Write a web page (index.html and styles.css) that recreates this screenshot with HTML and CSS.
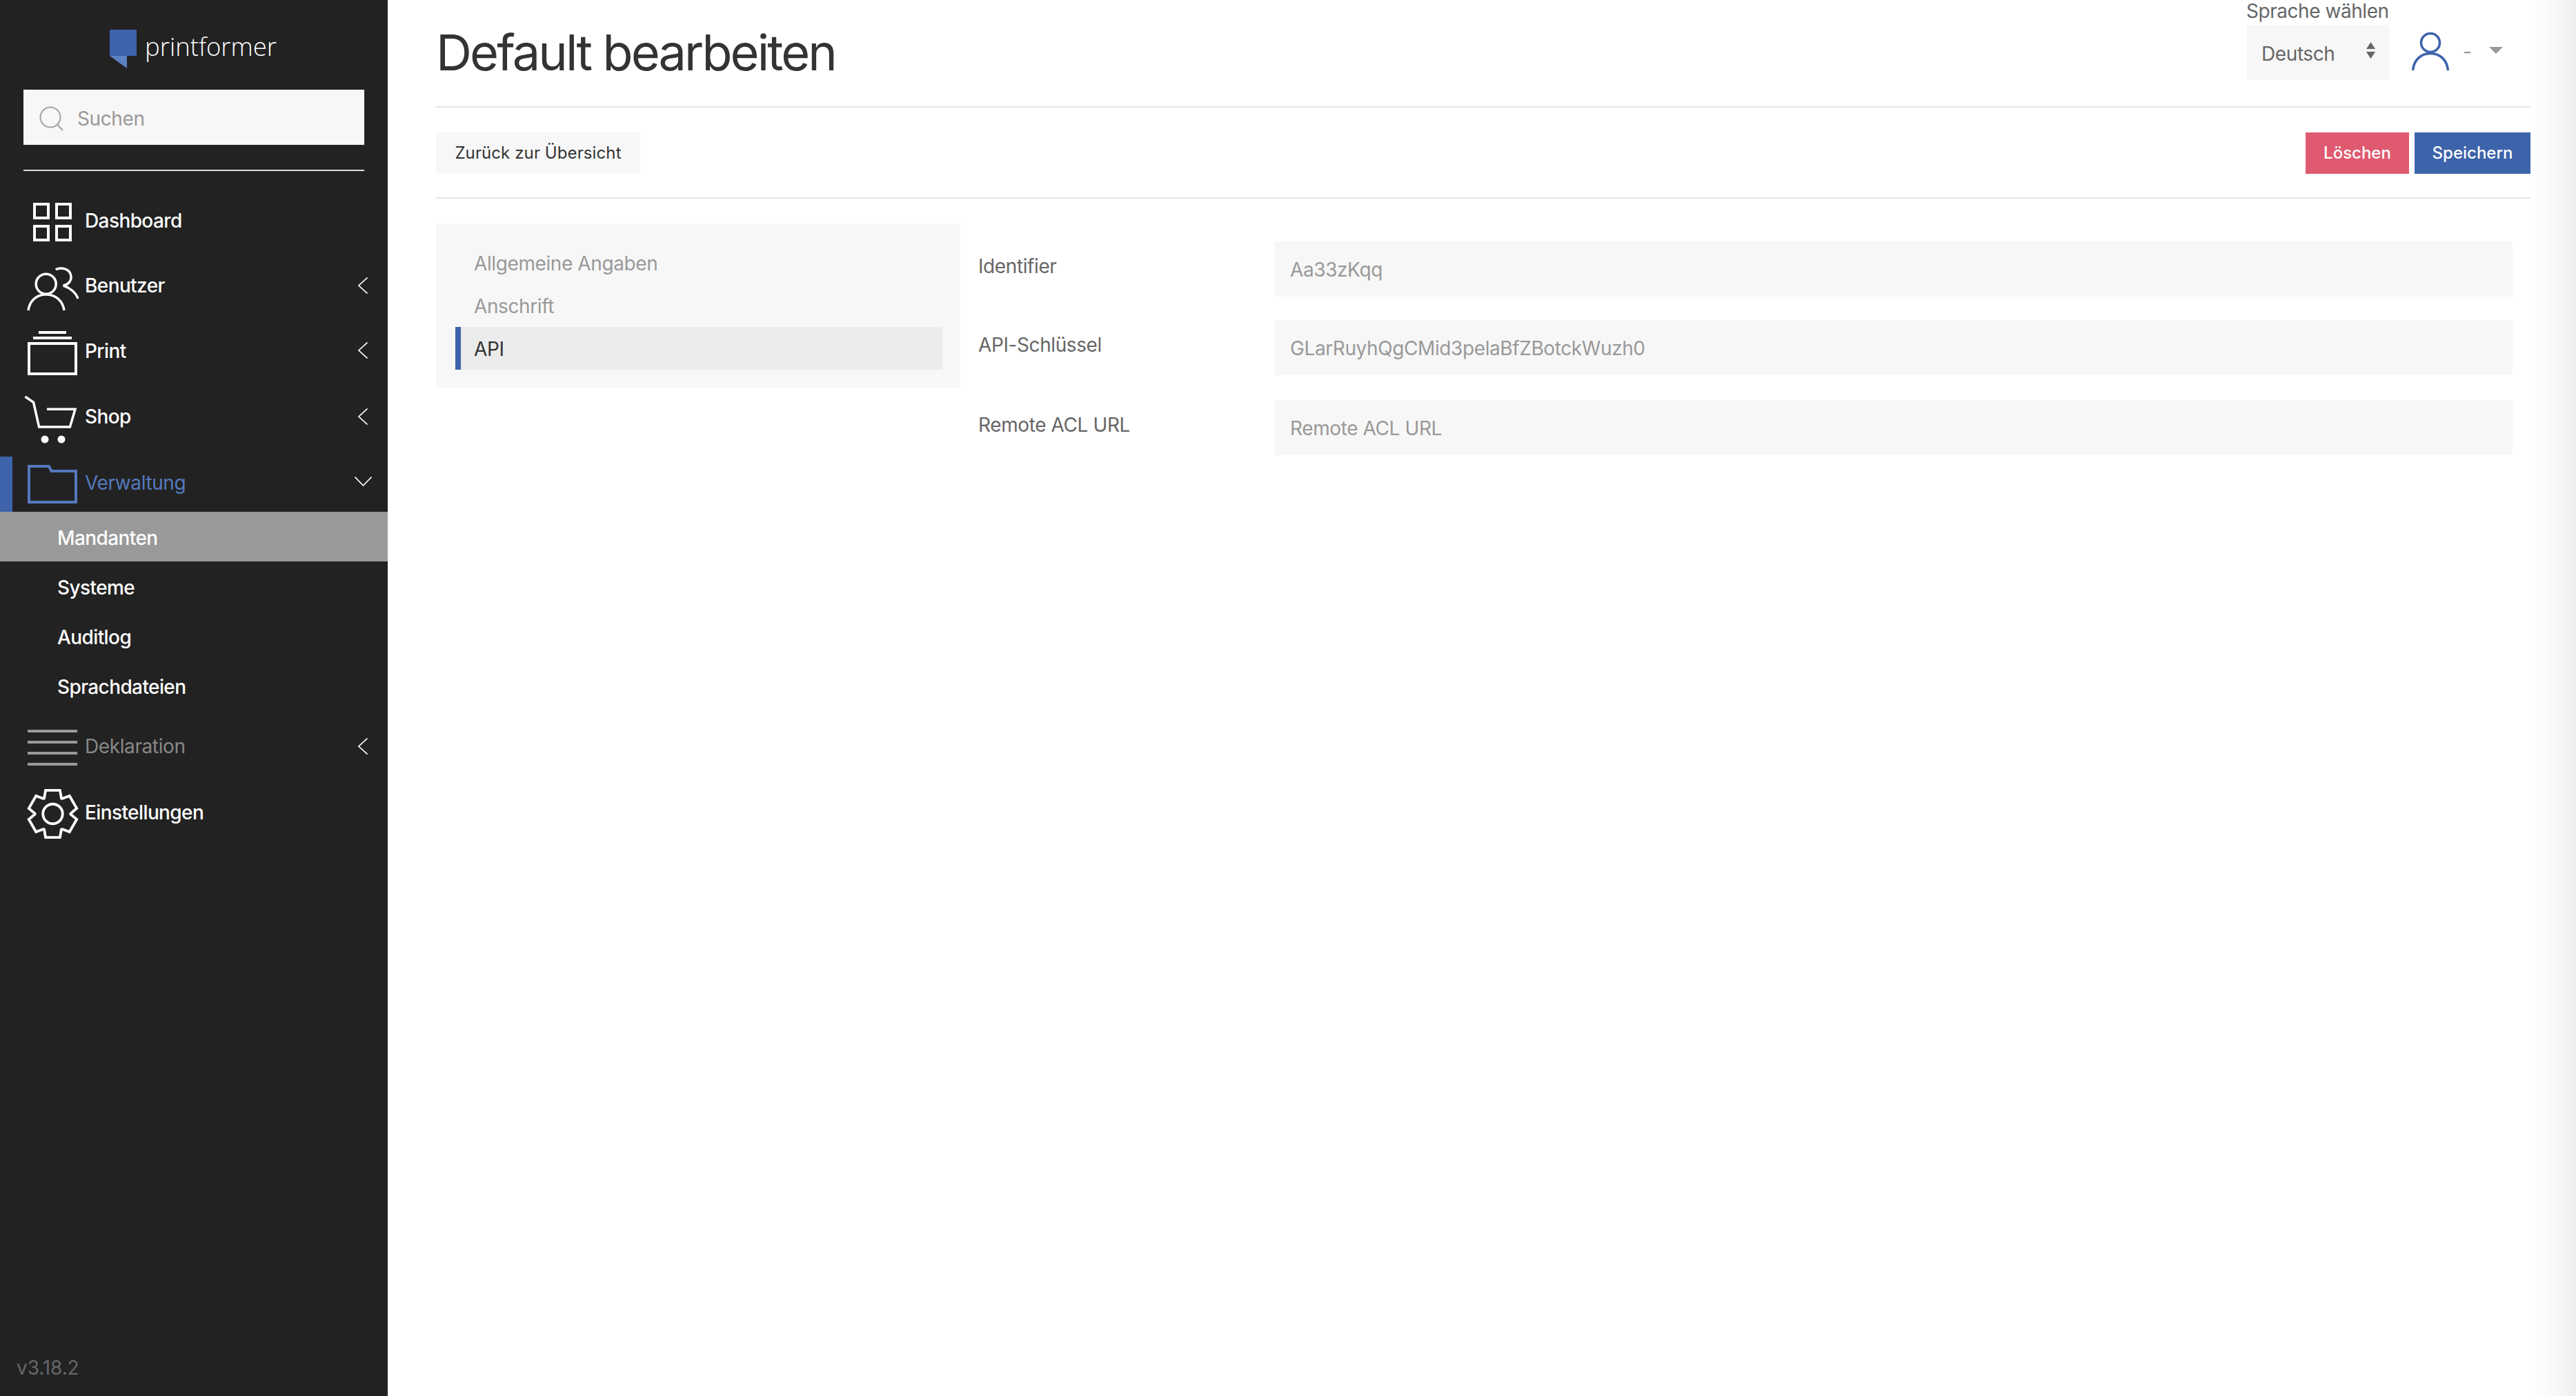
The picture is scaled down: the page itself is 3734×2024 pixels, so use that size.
FILE: index.html
```html
<!DOCTYPE html>
<html lang="de">
<head>
<meta charset="utf-8">
<title>Default bearbeiten</title>
<link rel="stylesheet" href="styles.css">
</head>
<body>
<div class="app">
  <aside class="sidebar">
    <div class="logo">
      <svg class="logo-mark" width="39" height="56" viewBox="0 0 39 56"><rect width="39" height="38" fill="#3d63aa"/><path d="M0 38H25V56Z" fill="#5c82c4"/></svg>
      <span class="logo-text">printformer</span>
    </div>
    <div class="search">
      <svg class="search-icon" width="36" height="36" viewBox="0 0 36 36" fill="none" stroke="#a3a3a3" stroke-width="2"><circle cx="16" cy="16" r="14.5"/><path d="M26 26.5L34 35"/></svg>
      <span>Suchen</span>
    </div>
    <div class="side-rule"></div>
    <nav class="nav">
      <a class="nav-row">
        <svg class="nav-icon" width="80" height="80" viewBox="0 0 80 80" fill="none" stroke="#fff" stroke-width="4"><rect x="14" y="18" width="20" height="20"/><rect x="46" y="18" width="20" height="20"/><rect x="14" y="50" width="20" height="20"/><rect x="46" y="50" width="20" height="20"/></svg>
        <span class="nav-label nav-label-low">Dashboard</span>
      </a>
      <a class="nav-row">
        <svg class="nav-icon" width="80" height="80" viewBox="0 0 80 80" fill="none" stroke="#fff" stroke-width="3.5"><circle cx="30.7" cy="37.7" r="14.5"/><path d="M5 76C7 62 17 53 30.7 53S55 62 57 76"/><path d="M44.7 16.7C52 13 66 15 67 27C67.5 34 62 39 55.7 40C65 43 74 50 77 59"/></svg>
        <span class="nav-label nav-label-mid">Benutzer</span>
        <svg class="chev chev-mid" width="14" height="24" viewBox="0 0 14 24" fill="none" stroke="#fff" stroke-width="1.6"><path d="M13.5 0.5L1 12L13.5 23.5"/></svg>
      </a>
      <a class="nav-row">
        <svg class="nav-icon" width="80" height="80" viewBox="0 0 80 80" fill="none" stroke="#fff" stroke-width="4"><path d="M20 12H60M12 20H68"/><rect x="6" y="28" width="68" height="44"/></svg>
        <span class="nav-label nav-label-print">Print</span>
        <svg class="chev" width="14" height="24" viewBox="0 0 14 24" fill="none" stroke="#fff" stroke-width="1.6"><path d="M13.5 0.5L1 12L13.5 23.5"/></svg>
      </a>
      <a class="nav-row">
        <svg class="nav-icon" width="80" height="80" viewBox="0 0 80 80" fill="none" stroke="#fff" stroke-width="3.5"><path d="M0.4 9L12.6 17.3L20.6 53H65.4L73 27.3H32"/><circle cx="29" cy="71" r="5.5" fill="#fff" stroke="none"/><circle cx="53" cy="71" r="5.5" fill="#fff" stroke="none"/></svg>
        <span class="nav-label">Shop</span>
        <svg class="chev" width="14" height="24" viewBox="0 0 14 24" fill="none" stroke="#fff" stroke-width="1.6"><path d="M13.5 0.5L1 12L13.5 23.5"/></svg>
      </a>
      <a class="nav-row nav-row-open">
        <svg class="nav-icon" width="80" height="80" viewBox="0 0 80 80" fill="none" stroke="#5578bd" stroke-width="4"><path d="M6 14H35L38.5 21H74V66H6Z"/></svg>
        <span class="nav-label">Verwaltung</span>
        <svg class="chev-down" width="25" height="14" viewBox="0 0 25 14" fill="none" stroke="#fff" stroke-width="1.6"><path d="M0.5 0.5L12.5 13L24.5 0.5"/></svg>
      </a>
      <div class="subnav">
        <a class="sub-row sub-row-active">Mandanten</a>
        <a class="sub-row">Systeme</a>
        <a class="sub-row">Auditlog</a>
        <a class="sub-row">Sprachdateien</a>
      </div>
      <a class="nav-row nav-row-muted">
        <svg class="nav-icon" width="80" height="80" viewBox="0 0 80 80" fill="none" stroke="#999" stroke-width="4"><path d="M4 16H76M4 32H76M4 48H76M4 64H76"/></svg>
        <span class="nav-label">Deklaration</span>
        <svg class="chev" width="14" height="24" viewBox="0 0 14 24" fill="none" stroke="#fff" stroke-width="1.6"><path d="M13.5 0.5L1 12L13.5 23.5"/></svg>
      </a>
      <a class="nav-row">
        <svg class="nav-icon" width="80" height="80" viewBox="0 0 80 80" fill="none" stroke="#fff" stroke-width="4"><g transform="translate(40.5 40) scale(.95 -.95)"><path d="M-12.71 26.07L-10.96 35.86H10.96L12.71 26.07Q12.5 21.65 16.22 24.04L25.57 27.43L36.54 8.44L28.93 2.02Q25 0 28.93 -2.02L36.54 -8.44L25.57 -27.43L16.22 -24.04Q12.5 -21.65 12.71 -26.07L10.96 -35.86H-10.96L-12.71 -26.07Q-12.5 -21.65 -16.22 -24.04L-25.57 -27.43L-36.54 -8.44L-28.93 -2.02Q-25 0 -28.93 2.02L-36.54 8.44L-25.57 27.43L-16.22 24.04Q-12.5 21.65 -12.71 26.07Z"/><circle r="15"/></g></svg>
        <span class="nav-label">Einstellungen</span>
      </a>
    </nav>
    <div class="version">v3.18.2</div>
  </aside>

  <main class="main">
    <div class="content">
      <header class="header">
        <h1 class="title">Default bearbeiten</h1>
        <div class="header-right">
          <div class="lang">
            <div class="lang-label">Sprache wählen</div>
            <div class="lang-select">
              <span>Deutsch</span>
              <svg width="13" height="24" viewBox="0 0 13 24" fill="#666"><path d="M6.5 0L13 10H0Z"/><path d="M0 14H13L6.5 24Z"/></svg>
            </div>
          </div>
          <div class="user">
            <svg width="54" height="54" viewBox="0 0 54 54" fill="none" stroke="#3d63aa" stroke-width="3.5"><circle cx="27" cy="14" r="13.5"/><path d="M1.5 54C3 39 13 29.5 27 29.5S51 39 52.5 54"/></svg>
            <span class="user-dash">-</span>
            <svg class="user-caret" width="20" height="10" viewBox="0 0 20 10" fill="#999"><path d="M0 0H20L10 10Z"/></svg>
          </div>
        </div>
      </header>

      <div class="toolbar">
        <a class="btn btn-light">Zurück zur Übersicht</a>
        <div class="toolbar-actions">
          <a class="btn btn-danger">Löschen</a>
          <a class="btn btn-primary">Speichern</a>
        </div>
      </div>

      <div class="editor">
        <div class="tabs">
          <a class="tab">Allgemeine Angaben</a>
          <a class="tab">Anschrift</a>
          <a class="tab tab-active">API</a>
        </div>
        <form class="form">
          <div class="field">
            <label class="field-label">Identifier</label>
            <div class="field-input">Aa33zKqq</div>
          </div>
          <div class="field field-b">
            <label class="field-label">API-Schlüssel</label>
            <div class="field-input">GLarRuyhQgCMid3pelaBfZBotckWuzh0</div>
          </div>
          <div class="field field-c">
            <label class="field-label">Remote ACL URL</label>
            <div class="field-input">Remote ACL URL</div>
          </div>
        </form>
      </div>
    </div>
    <div class="edge-shade"></div>
  </main>
</div>
</body>
</html>
```

FILE: styles.css
```css
* { box-sizing: border-box; }
html, body { height: 100%; }
body {
  margin: 0;
  font-family: Inter, "Liberation Sans", sans-serif;
  font-size: 28px;
  letter-spacing: -0.4px;
  background: #fff;
  color: #333;
}
a { text-decoration: none; color: inherit; display: block; }

.app { display: flex; height: 2024px; overflow: hidden; }

/* Sidebar */
.sidebar {
  width: 562px;
  flex: none;
  background: #222;
  display: flex;
  flex-direction: column;
  color: #fff;
}
.logo {
  height: 130px;
  padding: 43px 0 0 159px;
  display: flex;
  align-items: flex-start;
}
.logo-mark { flex: none; }
.logo-text {
  font-family: "Open Sans", sans-serif;
  font-weight: 300;
  font-size: 36.5px;
  letter-spacing: 0;
  line-height: 48px;
  margin: 0 0 0 12px;
  color: #fff;
}
.search {
  height: 80px;
  margin: 0 34px;
  background: #f7f7f7;
  color: #999;
  display: flex;
  align-items: center;
  padding-left: 23px;
}
.search-icon { margin: 3px 19px 0 0; flex: none; }
.search span { padding-top: 4px; }
.side-rule { height: 2px; margin: 36px 34px 0; background: #ddd; }
.nav { margin-top: 30px; display: flex; flex-direction: column; }
.nav-row {
  height: 80px;
  margin-bottom: 16px;
  display: flex;
  align-items: center;
  padding-left: 36px;
  font-weight: 500;
  letter-spacing: -0.6px;
}
.nav-icon { flex: none; overflow: visible; margin-right: 7px; }
.nav-label { padding-bottom: 4px; line-height: 34px; }
.nav-label-low { padding-bottom: 0; padding-top: 4px; }
.nav-label-mid { padding-bottom: 0; }
.nav-label-print { padding-bottom: 2px; }
.chev { margin: 0 29px 4px auto; flex: none; }
.chev-mid { margin-bottom: 0; }
.chev-down { margin: 0 23px 8px auto; flex: none; }
.nav-row-open {
  margin-bottom: 0;
  padding-left: 18px;
  border-left: 18px solid #3d63aa;
  color: #5578bd;
  font-weight: 400;
  letter-spacing: -0.4px;
}
.nav-row-muted { color: #888; font-weight: 400; letter-spacing: -0.4px; }
.subnav { display: flex; flex-direction: column; margin-bottom: 14px; }
.sub-row {
  height: 72px;
  line-height: 76px;
  padding-left: 83px;
  font-weight: 500;
  letter-spacing: -0.6px;
}
.sub-row-active { background: #999; }
.version {
  margin-top: auto;
  padding: 0 0 24px 24px;
  line-height: 34px;
  letter-spacing: -0.1px;
  color: #666;
}

/* Main */
.main { flex: 1; min-width: 0; display: flex; }
.content { flex: 1; min-width: 0; padding-left: 70px; }
.edge-shade {
  width: 66px;
  flex: none;
  background: linear-gradient(to right, #fff, #fbfbfb 40%, #eee);
}
.header {
  height: 156px;
  border-bottom: 2px solid #e5e5e5;
  display: flex;
  justify-content: space-between;
  align-items: flex-start;
}
.title {
  margin: 0;
  padding-top: 40px;
  font-size: 72px;
  line-height: 72px;
  font-weight: 400;
  letter-spacing: -2.9px;
  color: #333;
}
.header-right { display: flex; align-items: flex-start; padding-right: 40px; }
.lang { width: 206px; }
.lang-label { line-height: 32px; color: #666; margin: 0 0 4px -1px; letter-spacing: -0.45px; white-space: nowrap; }
.lang-select {
  height: 80px;
  background: #f7f7f7;
  color: #666;
  display: flex;
  align-items: center;
  justify-content: space-between;
  padding: 0 20px 0 21px;
}
.lang-select span { padding-top: 4px; }
.lang-select svg { margin-bottom: 6px; }
.user { margin: 48px 0 0 33px; display: flex; align-items: flex-start; }
.user svg { flex: none; overflow: visible; }
.user-dash { margin: 10px 0 0 20px; line-height: 34px; color: #999; width: 38px; }
.user-caret { margin-top: 20px; }

.toolbar {
  height: 132px;
  border-bottom: 2px solid #e5e5e5;
  padding-top: 36px;
  display: flex;
  justify-content: space-between;
  align-items: flex-start;
}
.toolbar-actions { display: flex; gap: 8px; }
.btn {
  height: 60px;
  line-height: 60px;
  font-size: 24px;
  letter-spacing: 0;
  text-align: center;
}
.btn-light { width: 296px; background: #f7f7f7; color: #333; letter-spacing: 0.1px; }
.btn-danger { width: 150px; background: #df5a70; color: #fff; font-weight: 500; }
.btn-primary { width: 168px; background: #3d63aa; color: #fff; font-weight: 500; }

.editor { margin-top: 36px; display: flex; align-items: flex-start; }
.tabs {
  width: 760px;
  height: 238px;
  flex: none;
  background: #f7f7f7;
  padding: 26px 26px 26px 28px;
}
.tab {
  height: 62px;
  line-height: 64px;
  padding-left: 27px;
  color: #999;
}
.tab-active {
  background: #ebebeb;
  border-left: 8px solid #3d63aa;
  padding-left: 19px;
  color: #333;
}
.form { flex: 1; min-width: 0; padding: 26px 26px 0 26px; }
.field { display: flex; }
.field-b { margin-top: 34px; }
.field-c { margin-top: 36px; }
.field-label {
  width: 430px;
  flex: none;
  line-height: 34px;
  padding-top: 19px;
  color: #666;
}
.field-input {
  flex: 1;
  height: 80px;
  line-height: 83px;
  padding-left: 22px;
  background: #f7f7f7;
  color: #999;
}
```
